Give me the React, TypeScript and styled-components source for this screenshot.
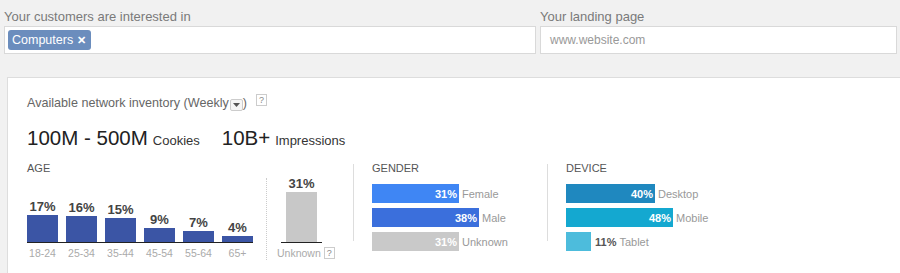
import { FC } from 'react'
import styled, { createGlobalStyle } from 'styled-components'

const GlobalStyle = createGlobalStyle`
  html, body {
    margin: 0;
    padding: 0;
    background: #f1f1f1;
    font-family: 'Liberation Sans', Arial, sans-serif;
  }
`

const ageData = [
  { label: '18-24', pct: 17 },
  { label: '25-34', pct: 16 },
  { label: '35-44', pct: 15 },
  { label: '45-54', pct: 9 },
  { label: '55-64', pct: 7 },
  { label: '65+', pct: 4 },
]

const genderData = [
  { label: 'Female', pct: 31, color: '#3f86f4' },
  { label: 'Male', pct: 38, color: '#3b6fdc' },
  { label: 'Unknown', pct: 31, color: '#c9c9c9' },
]

const deviceData = [
  { label: 'Desktop', pct: 40, color: '#1f88bf' },
  { label: 'Mobile', pct: 48, color: '#14a8d0' },
  { label: 'Tablet', pct: 11, color: '#4dbcdc' },
]

const HelpBox: FC = () => <Help>?</Help>

interface HBarProps {
  label: string
  pct: number
  color: string
  scale: number
}

const HBar: FC<HBarProps> = ({ label, pct, color, scale }) => {
  const width = Math.round(pct * scale)
  const inside = width > 40
  return (
    <HRow>
      <HFill $color={color} style={{ width }}>
        {inside && <span>{pct}%</span>}
      </HFill>
      {!inside && <OutsidePct>{pct}%</OutsidePct>}
      <HLabel>{label}</HLabel>
    </HRow>
  )
}

const App: FC = () => {
  return (
    <Page>
      <GlobalStyle />
      <TopRow>
        <Field $width={532}>
          <FieldLabel>Your customers are interested in</FieldLabel>
          <InputBox>
            <Chip>
              Computers <ChipX>✕</ChipX>
            </Chip>
          </InputBox>
        </Field>
        <Field>
          <FieldLabel>Your landing page</FieldLabel>
          <InputBox>
            <Placeholder>www.website.com</Placeholder>
          </InputBox>
        </Field>
      </TopRow>

      <Panel>
        <InventoryLine>
          Available network inventory (Weekly
          <DropBtn>
            <svg width="7" height="4" viewBox="0 0 7 4">
              <path d="M0 0h7L3.5 4z" fill="#555" />
            </svg>
          </DropBtn>
          )
          <HelpBox />
        </InventoryLine>

        <Totals>
          <Big>100M - 500M</Big>
          <Unit>Cookies</Unit>
          <Big $gap={22}>10B+</Big>
          <Unit>Impressions</Unit>
        </Totals>

        <Stats>
          <AgeSection>
            <SectionTitle>Age</SectionTitle>
            <AgeCharts>
              <Columns>
                {ageData.map((d) => (
                  <Column key={d.label}>
                    <ColPct>{d.pct}%</ColPct>
                    <ColBar $color="#3b55a5" style={{ height: Math.round(d.pct * 1.6) }} />
                  </Column>
                ))}
              </Columns>
              <ColLabels>
                {ageData.map((d) => (
                  <ColLabel key={d.label}>{d.label}</ColLabel>
                ))}
              </ColLabels>
            </AgeCharts>
            <DottedSep />
            <UnknownAge>
              <UnknownColumns>
                <Column>
                  <ColPct>31%</ColPct>
                  <ColBar $color="#c8c8c8" style={{ height: Math.round(31 * 1.6) }} />
                </Column>
              </UnknownColumns>
              <UnknownLabel>
                Unknown <HelpBox />
              </UnknownLabel>
            </UnknownAge>
          </AgeSection>

          <SolidSep />

          <BarSection $width={175}>
            <SectionTitle>Gender</SectionTitle>
            <HList>
              {genderData.map((d) => (
                <HBar key={d.label} {...d} scale={2.82} />
              ))}
            </HList>
          </BarSection>

          <SolidSep />

          <BarSection>
            <SectionTitle>Device</SectionTitle>
            <HList>
              {deviceData.map((d) => (
                <HBar key={d.label} {...d} scale={2.23} />
              ))}
            </HList>
          </BarSection>
        </Stats>
      </Panel>
    </Page>
  )
}

const Page = styled('div')`
  width: 900px;
  height: 273px;
  overflow: hidden;
  background: #f1f1f1;
  display: flex;
  flex-direction: column;
`

const TopRow = styled('div')`
  display: flex;
  gap: 4px;
  padding: 8px 3px 0 4px;
`

const Field = styled('div')<{ $width?: number }>`
  display: flex;
  flex-direction: column;
  ${(p) => (p.$width ? `width: ${p.$width}px;` : 'flex: 1;')}
`

const FieldLabel = styled('div')`
  font-size: 13px;
  line-height: 17px;
  color: #7a7a7a;
  margin-bottom: 1px;
`

const InputBox = styled('div')`
  height: 26px;
  background: #fff;
  border: 1px solid #d9d9d9;
  display: flex;
  align-items: center;
  padding: 0 3px;
`

const Chip = styled('div')`
  display: flex;
  align-items: center;
  gap: 4px;
  height: 20px;
  padding: 0 5px 0 4px;
  border-radius: 3px;
  background: #6b8dbd;
  color: #fff;
  font-size: 12.5px;
`

const ChipX = styled('span')`
  font-weight: 700;
  font-size: 11px;
`

const Placeholder = styled('span')`
  font-size: 12px;
  color: #999;
  padding-left: 6px;
`

const Panel = styled('div')`
  flex: 1;
  margin: 23px 0 0 7px;
  background: #fff;
  border-top: 1px solid #ddd;
  border-left: 1px solid #ddd;
  padding: 17px 0 0 19px;
`

const InventoryLine = styled('div')`
  display: flex;
  align-items: center;
  font-size: 12.6px;
  line-height: 16px;
  color: #666;
`

const DropBtn = styled('span')`
  display: inline-flex;
  align-items: center;
  justify-content: center;
  width: 11px;
  height: 10px;
  margin: 3px 0 0 1px;
  border: 1px solid #ccc;
  border-radius: 2px;
  background: #f6f6f6;
`

const Help = styled('span')`
  display: inline-flex;
  align-items: center;
  justify-content: center;
  width: 9px;
  height: 10px;
  margin: -6px 0 0 9px;
  border: 1px solid #ccc;
  font-size: 9px;
  line-height: 10px;
  color: #888;
  background: #fff;
`

const Totals = styled('div')`
  display: flex;
  align-items: baseline;
  margin-top: 15px;
  color: #222;
`

const Big = styled('span')<{ $gap?: number }>`
  font-size: 20.5px;
  margin-left: ${(p) => p.$gap ?? 0}px;
`

const Unit = styled('span')`
  font-size: 13px;
  margin-left: 5px;
  color: #333;
`

const Stats = styled('div')`
  display: flex;
  margin-top: 12px;
`

const SectionTitle = styled('div')`
  position: absolute;
  top: 0;
  left: 0;
  font-size: 11px;
  line-height: 13px;
  text-transform: uppercase;
  color: #555;
`

const AgeSection = styled('div')`
  position: relative;
  display: flex;
  padding-top: 16px;
  width: 326px;
`

const AgeCharts = styled('div')`
  display: flex;
  flex-direction: column;
`

const Columns = styled('div')`
  display: flex;
  align-items: flex-end;
  gap: 8px;
  height: 64px;
  border-bottom: 1px solid #222;
`

const UnknownColumns = styled(Columns)`
  padding: 0 5px;
`

const Column = styled('div')`
  display: flex;
  flex-direction: column;
  align-items: center;
  width: 31px;
`

const ColPct = styled('div')`
  font-size: 13px;
  font-weight: 700;
  line-height: 15px;
  color: #444;
  margin-bottom: 1px;
`

const ColBar = styled('div')<{ $color: string }>`
  width: 100%;
  background: ${(p) => p.$color};
`

const ColLabels = styled('div')`
  display: flex;
  gap: 8px;
  margin-top: 4px;
`

const ColLabel = styled('div')`
  width: 31px;
  text-align: center;
  font-size: 10.5px;
  line-height: 13px;
  color: #aaa;
`

const DottedSep = styled('div')`
  width: 0;
  margin: 0 14px 0 13px;
  height: 82px;
  border-left: 1px dotted #ccc;
`

const UnknownAge = styled('div')`
  display: flex;
  flex-direction: column;
  align-items: flex-start;
`

const UnknownLabel = styled('div')`
  display: flex;
  align-items: center;
  margin: 4px 0 0 -4px;
  font-size: 10.5px;
  line-height: 13px;
  color: #aaa;

  ${Help} {
    margin: -2px 0 0 3px;
  }
`

const SolidSep = styled('div')`
  width: 1px;
  height: 77px;
  margin-top: 2px;
  background: #ddd;
`

const BarSection = styled('div')<{ $width?: number }>`
  position: relative;
  padding: 22px 0 0 18px;
  ${(p) => (p.$width ? `width: ${p.$width}px;` : 'flex: 1;')}

  ${SectionTitle} {
    left: 18px;
  }
`

const HList = styled('div')`
  display: flex;
  flex-direction: column;
  gap: 5px;
`

const HRow = styled('div')`
  display: flex;
  align-items: center;
  height: 19px;
  font-size: 11px;
`

const HFill = styled('div')<{ $color: string }>`
  height: 19px;
  background: ${(p) => p.$color};
  display: flex;
  align-items: center;
  justify-content: flex-end;
  padding-right: 2px;
  box-sizing: border-box;
  color: #fff;
  font-weight: 700;
`

const OutsidePct = styled('span')`
  margin-left: 4px;
  font-weight: 700;
  color: #555;
`

const HLabel = styled('span')`
  margin-left: 3px;
  color: #999;
`

export default App
